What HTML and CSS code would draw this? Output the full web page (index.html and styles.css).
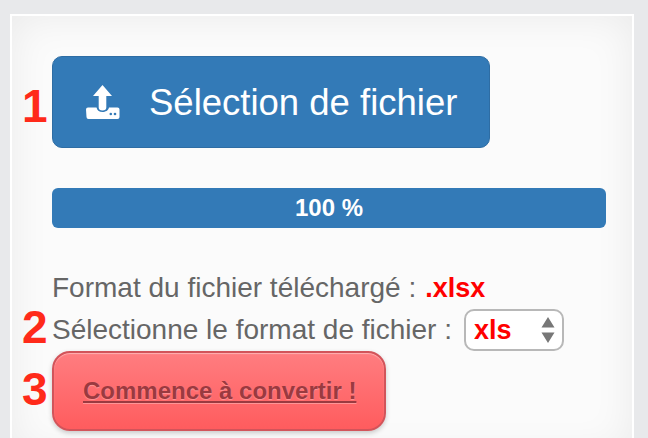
FILE: index.html
```html
<!DOCTYPE html>
<html lang="fr">
<head>
    <meta charset="UTF-8">
    <title>Convertisseur</title>
    <link rel="stylesheet" href="styles.css">
</head>
<body>
    <div class="panel">
        <div class="upload-row">
            <span class="step-num step-1">1</span>
            <button class="upload-btn" type="button">
                <svg class="upload-icon" viewBox="0 0 34 34" width="34" height="34">
                    <path fill="#fff" d="M0 24.5a2 2 0 0 1 2-2h8.5c.6 3 3 4.5 6 4.5s5.900-1.500 6.500-4.500h8.500a2 2 0 0 1 2 2v7.500a2 2 0 0 1-2 2h-29a2 2 0 0 1-2-2z"/>
                    <path fill="#fff" d="M16.500 0l9.500 11h-5.700v11.500a3.800 3 0 0 1-7.600 0v-11.500h-5.700z"/>
                    <circle fill="#337ab7" cx="24.800" cy="29" r="1.300"/>
                    <circle fill="#337ab7" cx="29" cy="29" r="1.300"/>
                </svg>
                <span class="upload-label">Sélection de fichier</span>
            </button>
        </div>

        <div class="progress">100 %</div>

        <div class="format-line first-line">Format du fichier téléchargé : <strong class="red">.xlsx</strong></div>
        <div class="format-line select-line">
            <span class="step-num step-2">2</span>
            <label for="format">Sélectionne le format de fichier :</label>
            <span class="select-wrap">
                <select id="format" class="format-select">
                    <option>xls</option>
                    <option>csv</option>
                </select>
                <svg class="select-arrows" viewBox="0 0 14 26" width="14" height="26">
                    <path fill="#777" d="M7 0l6.500 10.500h-13zM7 26l-6.500-10.500h13z"/>
                </svg>
            </span>
        </div>

        <div class="convert-row">
            <span class="step-num step-3">3</span>
            <a class="convert-btn" href="#">Commence à convertir !</a>
        </div>
    </div>
</body>
</html>
```

FILE: styles.css
```css
html, body {
    height: 100%;
}
body {
    margin: 0;
    padding: 14px 14px 0 10px;
    box-sizing: border-box;
    overflow: hidden;
    background-color: #e8e9eb;
    font-family: "Liberation Sans", Arial, sans-serif;
    color: #666;
}
.panel {
    height: 440px;
    box-sizing: border-box;
    padding: 40px 26px 0 40px;
    background-color: #fbfbfb;
    border: 2px solid #fff;
    border-bottom: 0;
    box-shadow: inset 0 0 40px rgba(0, 0, 0, 0.07);
}
.upload-row,
.select-line,
.convert-row {
    position: relative;
}
.step-num {
    position: absolute;
    left: -30px;
    font-size: 46px;
    font-weight: bold;
    line-height: 46px;
    color: #ff2a1a;
}
.step-1 {
    top: 27px;
}
.step-2 {
    top: -5px;
}
.step-3 {
    top: 15px;
}
.upload-btn {
    display: flex;
    align-items: center;
    gap: 29px;
    width: 438px;
    height: 92px;
    padding: 0 0 0 33px;
    background-color: #337ab7;
    border: 1px solid #2e6da4;
    border-radius: 10px;
    color: #fff;
    font-family: inherit;
    font-size: 36.5px;
}
.upload-label {
    padding-top: 2px;
}
.progress {
    height: 40px;
    margin-top: 40px;
    background-color: #337ab7;
    border-radius: 6px;
    color: #fff;
    font-size: 24px;
    font-weight: bold;
    line-height: 40px;
    text-align: center;
}
.format-line {
    display: flex;
    align-items: center;
    gap: 9px;
    height: 42px;
    font-size: 28px;
}
.first-line {
    margin-top: 39px;
}
.select-line {
    gap: 12px;
}
.red {
    color: #f00;
    font-size: 27px;
}
.select-wrap {
    position: relative;
    display: block;
}
.format-select {
    display: block;
    width: 100px;
    height: 42px;
    padding: 0 0 0 8px;
    appearance: none;
    background-color: #fff;
    border: 2px solid #b8b8b8;
    border-radius: 10px;
    color: #f00;
    font-family: inherit;
    font-size: 27px;
    font-weight: bold;
}
.select-arrows {
    position: absolute;
    top: 8px;
    right: 9px;
}
.convert-btn {
    display: flex;
    align-items: center;
    box-sizing: border-box;
    width: 334px;
    height: 80px;
    padding-left: 29px;
    background: linear-gradient(#ff7d80, #ff5c5e);
    border: 2px solid #d2545a;
    border-radius: 18px;
    box-shadow: 0 2px 5px rgba(0, 0, 0, 0.2), inset 0 1px 1px rgba(255, 255, 255, 0.4);
    color: #9a3a40;
    font-size: 24px;
    font-weight: bold;
    text-shadow: 0 1px 1px rgba(255, 255, 255, 0.3);
}
```
